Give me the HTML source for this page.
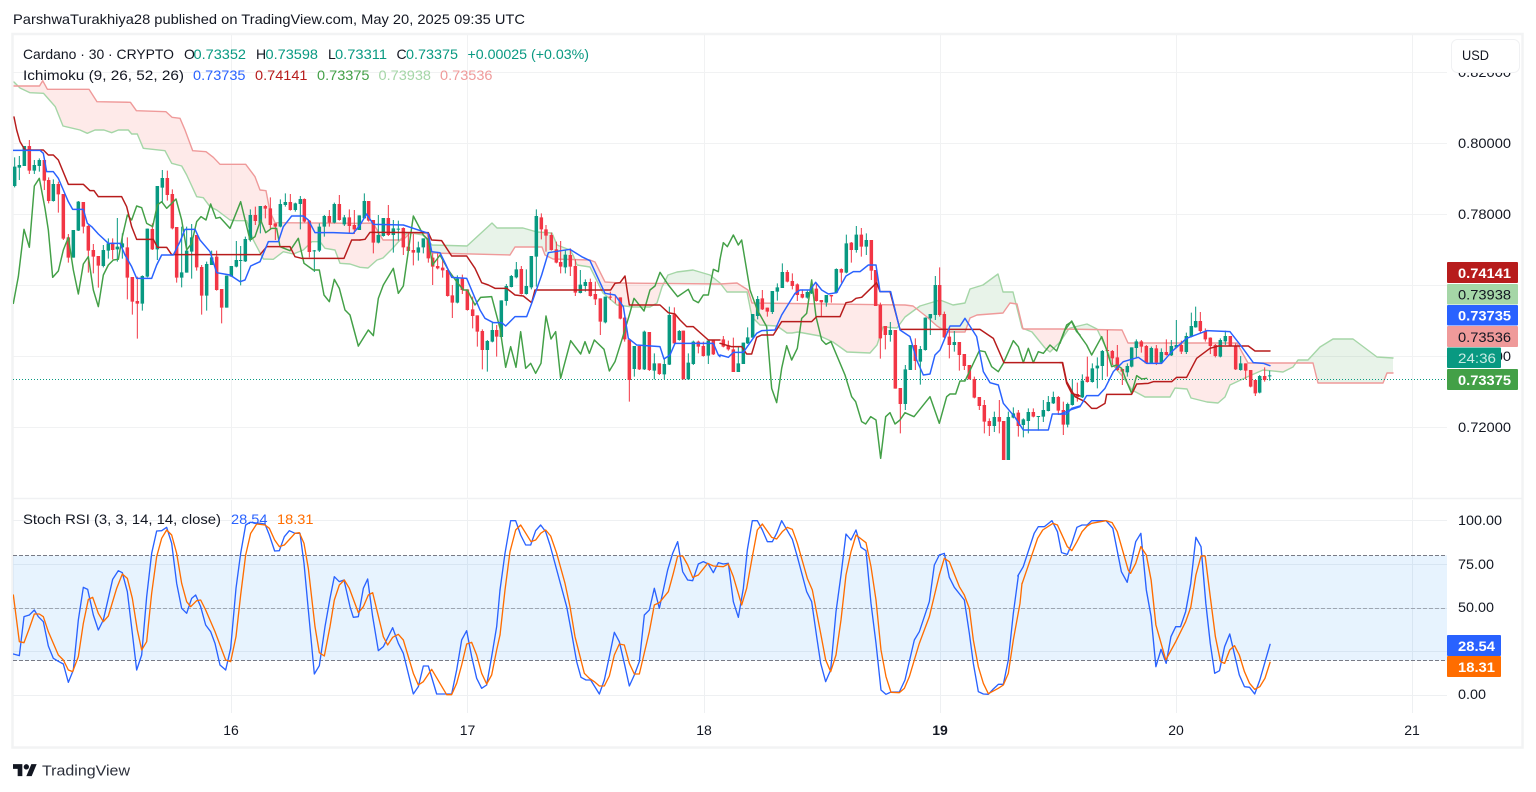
<!DOCTYPE html>
<html lang="en"><head><meta charset="utf-8"><title>Cardano chart</title>
<style>
html,body{margin:0;padding:0;background:#fff;width:1536px;height:792px;overflow:hidden}
svg{display:block;position:absolute;left:0;top:0}
text{font-family:"Liberation Sans",sans-serif;font-size:14px;fill:#131722}
.w{fill:none;stroke-linejoin:round;stroke-linecap:butt}
.l{fill:none;stroke-linejoin:round;stroke-linecap:round}
.gw{stroke:#089981;stroke-width:3}.gb{stroke:#089981;stroke-width:10.5}
.rw{stroke:#f23645;stroke-width:3}.rb{stroke:#f23645;stroke-width:10.5}
.tk{stroke:#2962ff;stroke-width:4.4}.kj{stroke:#b71c1c;stroke-width:4.4}.ch{stroke:#43a047;stroke-width:4.4}
.or{stroke:#ff6d00;stroke-width:4}.bl{stroke:#2962ff;stroke-width:4}
</style></head><body>
<svg width="1536" height="792" viewBox="0 0 1536 792" xmlns="http://www.w3.org/2000/svg">
<defs>
<clipPath id="pa"><rect x="13" y="35" width="1434" height="463"/></clipPath>
<clipPath id="pb"><rect x="13" y="500" width="1434" height="213"/></clipPath>
<clipPath id="belowB"><path d="M14 86L39.5 86L42.7 80.7L47.4 89.3L89 89.3L97 101.7L130.4 102.3L136.4 110.7L166 111.7L172 117.3L180 118.3L185 130L192.7 150.7L206 151.7L213.3 157.3L220 164.3L245.7 164.3L255 176.7L260 190L266 190.7L270 211.7L275 222.7L360 223.3L373 223L383 240L403 240L410 233L427 233L432 253L510 255L515 247L542 247L545 255L553 259L590 260L595 262L605 282L620 283L720 284L737 283L748 290L752 303L905 305L913 306L927 317L937 326L947 332L965 332L970 318L977 315L1003 313L1010 303L1017 304L1023 329L1060 329L1122 330L1128 343L1237 343L1248 363L1313 363L1318 383L1383 383L1387 373L1393 373L1393 700L14 700Z"/></clipPath>
<clipPath id="aboveB"><path d="M14 86L39.5 86L42.7 80.7L47.4 89.3L89 89.3L97 101.7L130.4 102.3L136.4 110.7L166 111.7L172 117.3L180 118.3L185 130L192.7 150.7L206 151.7L213.3 157.3L220 164.3L245.7 164.3L255 176.7L260 190L266 190.7L270 211.7L275 222.7L360 223.3L373 223L383 240L403 240L410 233L427 233L432 253L510 255L515 247L542 247L545 255L553 259L590 260L595 262L605 282L620 283L720 284L737 283L748 290L752 303L905 305L913 306L927 317L937 326L947 332L965 332L970 318L977 315L1003 313L1010 303L1017 304L1023 329L1060 329L1122 330L1128 343L1237 343L1248 363L1313 363L1318 383L1383 383L1387 373L1393 373L1393 0L14 0Z"/></clipPath>
</defs>

<rect x="12.5" y="34" width="1510" height="713.5" fill="#fff" stroke="#f2f3f4" stroke-width="2.5"/>
<path d="M13 498.5H1522" stroke="#f0f1f3" stroke-width="1.5" fill="none"/>

<!-- grid -->
<path d="M13 72.5H1447M13 143.5H1447M13 214.5H1447M13 285.5H1447M13 356.5H1447M13 427.5H1447M231.5 35V498M467.5 35V498M704.5 35V498M940.5 35V498M1176.5 35V498M1412.5 35V498" stroke="#f1f2f3" fill="none"/>
<path d="M13 520.5H1447M13 564.5H1447M13 608.5H1447M13 651.5H1447M13 695.5H1447M231.5 500V713M467.5 500V713M704.5 500V713M940.5 500V713M1176.5 500V713M1412.5 500V713" stroke="#eef0f2" fill="none"/>

<g clip-path="url(#pa)">
<!-- cloud -->
<g clip-path="url(#belowB)"><path fill="#f44336" fill-opacity=".11" d="M14 82L20 88L30 92.7L43.5 93.3L49.4 100L55.3 106.7L63 126L80 130L87.3 133.3L95 130L104 130L111.7 132.7L118.3 130L128.3 130L131.7 134L137.3 134L143.3 148.3L165 150.7L171.7 163.3L181.7 166L186.7 175L196.7 196.7L203.3 197.7L210 206.7L216.7 210L230 220L236.7 220.7L246.7 220.7L253.3 240L263.3 259L273.3 259.3L283.3 251.7L293.3 254L303.3 250L311.7 241.7L320 241.7L325 248.3L335 250L340 263.3L350 264L360 267.3L368 268L377 260L383 258L393 248L400 240L407 233L412 233L423 235L432 245L467 246L492 223L497 228L523 228L537 232L552 233L557 245L570 250L573 255L577 265L590 267L603 293L617 305L633 307L650 307L657 303L662 287L668 275L677 272L693 270L710 275L720 283L727 292L747 292L752 317L760 325L777 326L787 333L792 333L798 332L820 336L833 342L847 352L870 353L877 345L883 327L897 328L905 317L920 306L940 300L953 305L965 303L970 289L983 285L998 274L1003 292L1013 292L1022 328L1032 332L1045 348L1050 352L1060 342L1068 330L1070 328L1087 324L1097 329L1107 350L1113 365L1123 377L1132 390L1145 397L1170 397L1175 388L1187 389L1191 398L1207 402L1218 403L1225 397L1230 385L1247 377L1263 370L1283 372L1293 367L1298 360L1308 360L1320 347L1333 339L1353 339L1377 357L1393 358L1393 0L14 0Z"/></g>
<g clip-path="url(#aboveB)"><path fill="#43a047" fill-opacity=".12" d="M14 82L20 88L30 92.7L43.5 93.3L49.4 100L55.3 106.7L63 126L80 130L87.3 133.3L95 130L104 130L111.7 132.7L118.3 130L128.3 130L131.7 134L137.3 134L143.3 148.3L165 150.7L171.7 163.3L181.7 166L186.7 175L196.7 196.7L203.3 197.7L210 206.7L216.7 210L230 220L236.7 220.7L246.7 220.7L253.3 240L263.3 259L273.3 259.3L283.3 251.7L293.3 254L303.3 250L311.7 241.7L320 241.7L325 248.3L335 250L340 263.3L350 264L360 267.3L368 268L377 260L383 258L393 248L400 240L407 233L412 233L423 235L432 245L467 246L492 223L497 228L523 228L537 232L552 233L557 245L570 250L573 255L577 265L590 267L603 293L617 305L633 307L650 307L657 303L662 287L668 275L677 272L693 270L710 275L720 283L727 292L747 292L752 317L760 325L777 326L787 333L792 333L798 332L820 336L833 342L847 352L870 353L877 345L883 327L897 328L905 317L920 306L940 300L953 305L965 303L970 289L983 285L998 274L1003 292L1013 292L1022 328L1032 332L1045 348L1050 352L1060 342L1068 330L1070 328L1087 324L1097 329L1107 350L1113 365L1123 377L1132 390L1145 397L1170 397L1175 388L1187 389L1191 398L1207 402L1218 403L1225 397L1230 385L1247 377L1263 370L1283 372L1293 367L1298 360L1308 360L1320 347L1333 339L1353 339L1377 357L1393 358L1393 700L14 700Z"/></g>
<path class="l" stroke="#a5d6a7" stroke-width="1.4" d="M14 82L20 88L30 92.7L43.5 93.3L49.4 100L55.3 106.7L63 126L80 130L87.3 133.3L95 130L104 130L111.7 132.7L118.3 130L128.3 130L131.7 134L137.3 134L143.3 148.3L165 150.7L171.7 163.3L181.7 166L186.7 175L196.7 196.7L203.3 197.7L210 206.7L216.7 210L230 220L236.7 220.7L246.7 220.7L253.3 240L263.3 259L273.3 259.3L283.3 251.7L293.3 254L303.3 250L311.7 241.7L320 241.7L325 248.3L335 250L340 263.3L350 264L360 267.3L368 268L377 260L383 258L393 248L400 240L407 233L412 233L423 235L432 245L467 246L492 223L497 228L523 228L537 232L552 233L557 245L570 250L573 255L577 265L590 267L603 293L617 305L633 307L650 307L657 303L662 287L668 275L677 272L693 270L710 275L720 283L727 292L747 292L752 317L760 325L777 326L787 333L792 333L798 332L820 336L833 342L847 352L870 353L877 345L883 327L897 328L905 317L920 306L940 300L953 305L965 303L970 289L983 285L998 274L1003 292L1013 292L1022 328L1032 332L1045 348L1050 352L1060 342L1068 330L1070 328L1087 324L1097 329L1107 350L1113 365L1123 377L1132 390L1145 397L1170 397L1175 388L1187 389L1191 398L1207 402L1218 403L1225 397L1230 385L1247 377L1263 370L1283 372L1293 367L1298 360L1308 360L1320 347L1333 339L1353 339L1377 357L1393 358"/>
<path class="l" stroke="#ef9a9a" stroke-width="1.4" d="M14 86L39.5 86L42.7 80.7L47.4 89.3L89 89.3L97 101.7L130.4 102.3L136.4 110.7L166 111.7L172 117.3L180 118.3L185 130L192.7 150.7L206 151.7L213.3 157.3L220 164.3L245.7 164.3L255 176.7L260 190L266 190.7L270 211.7L275 222.7L360 223.3L373 223L383 240L403 240L410 233L427 233L432 253L510 255L515 247L542 247L545 255L553 259L590 260L595 262L605 282L620 283L720 284L737 283L748 290L752 303L905 305L913 306L927 317L937 326L947 332L965 332L970 318L977 315L1003 313L1010 303L1017 304L1023 329L1060 329L1122 330L1128 343L1237 343L1248 363L1313 363L1318 383L1383 383L1387 373L1393 373"/>

<!-- last price dotted -->
<path d="M13 379.5H1447" stroke="#089981" stroke-dasharray="1 2" fill="none"/>

<!-- candles section 1 -->
<g transform="matrix(.33333 0 0 .33333 0 130)">
<path class="w gw" d="M44 82V172M58 78V150M73 48V108M103 90V132M118 85V125M160 148V215M220 300V383M235 213V303M310 345V412M325 325V386M352 264V395M367 310V386M427 436V542M442 296V442M472 168V390M487 120V216M545 290V472M560 290V428M575 282V446M620 395V542M635 362V404M680 437V533M694 408V440M709 333V412M722 348V466M736 320V396M751 238V335M781 228V310M841 208V292M856 190V230M886 218V245M901 198V298M943 360V426M958 280V366M973 255V320M1003 218V280M1033 255V288M1078 256V300"/>
<path class="w gb" d="M44 110V168M58 105V113M73 48V108M103 105V122M118 90V108M160 162V213M220 300V383M235 215V302M310 360V408M325 340V362M352 350V358M367 340V352M427 438V521M442 296V440M472 168V358M487 144V173M545 427V443M560 362V428M575 322V365M620 402V497M635 382V405M680 437V533M694 408V440M709 390V410M722 390V393M736 327V394M751 255V330M781 228V280M841 222V290M856 216V225M886 220V240M901 207V222M943 361V364M958 290V362M973 258V290M1003 222V278M1033 262V283M1078 256V300"/>
<path class="w rw" d="M88 30V132M133 90V180M146 142V220M175 155V248M190 192V330M205 312V398M250 216V310M265 285V428M280 342V430M295 378V473M338 325V388M382 322V508M397 441V554M412 440V626M457 280V360M502 122V212M517 178V298M530 291V458M590 315V422M605 405V554M650 362V482M665 477V580M766 230V285M796 225V265M811 202V298M826 280V330M871 192V242M913 205V278M928 270V382M988 240V290M1018 195V272M1048 238V310M1063 240V312"/>
<path class="w rb" d="M88 48V122M133 90V152M146 150V213M175 162V193M190 192V326M205 322V383M250 216V290M265 288V362M280 360V380M295 378V407M338 338V360M382 352V443M397 441V515M412 513V521M457 297V358M502 144V195M517 192V295M530 291V443M590 315V412M605 411V497M650 380V480M665 477V533M766 255V273M796 228V236M811 235V285M826 280V290M871 216V240M913 207V275M928 272V366M988 258V278M1018 222V270M1048 262V288M1063 285V298"/>
</g>
<!-- candles section 2 -->
<g transform="matrix(.33333 0 0 .33333 360 190)">
<path class="w gw" d="M13 10V85M55 75V160M70 84V140M100 90V188M115 92V152M175 155V212M190 145V190M292 256V340M382 450V545M397 398V457M424 331V442M439 282V347M454 255V292M469 216V265M499 238V314M514 198V298M529 58V290M616 180V250M661 240V310M676 268V305M736 320V400M823 468V560M853 422V540M883 490V568M913 505V568M928 350V525M958 420V452M985 490V568M1000 452V525M1045 448V522"/>
<path class="w gb" d="M13 33V85M55 135V158M70 84V138M100 115V135M115 116V119M175 172V188M190 145V172M292 266V338M382 453V480M397 420V455M424 331V441M439 288V333M454 258V291M469 238V262M499 288V312M514 198V292M529 78V200M616 194V232M661 284V309M676 276V288M736 320V397M823 468V537M853 425V538M883 520V542M913 522V553M928 375V524M958 423V450M985 518V568M1000 455V522M1045 452V497"/>
<path class="w rw" d="M26 33V95M40 90V190M85 45V138M130 112V195M145 130V185M160 132V226M205 130V218M218 190V285M233 190V238M248 205V263M263 240V320M277 285V384M307 254V312M322 298V362M338 320V415M352 376V470M367 418V538M410 405V500M484 228V314M544 70V148M558 105V185M574 128V182M589 155V220M602 153V250M631 175V258M646 208V318M691 266V320M706 275V345M721 325V435M751 305V330M766 315V340M781 322V388M794 380V455M808 448V635M838 468V540M868 426V543M898 520V555M943 352V462M970 422V568M1015 452V490M1030 455V500M1060 450V495"/>
<path class="w rb" d="M26 33V92M40 90V158M85 84V135M130 114V172M145 170V183M160 180V188M205 145V205M218 203V230M233 228V235M248 233V241M263 240V318M277 316V338M307 264V300M322 298V360M338 358V378M352 376V425M367 423V480M410 420V440M484 237V312M544 82V118M558 118V137M574 135V180M589 178V218M602 216V230M631 195V230M646 228V308M691 276V318M706 312V328M721 325V395M751 320V323M781 322V386M794 383V448M808 448V570M838 468V538M868 426V540M898 520V552M943 374V460M970 422V568M1015 455V470M1030 468V498M1060 450V493"/>
</g>
<!-- candles section 3 -->
<g transform="matrix(.33333 0 0 .33333 720 220)">
<path class="w gw" d="M55 380V456M70 368V432M83 322V372M98 282V353M113 228V298M157 213V282M172 190V242M187 130V204M262 212V236M275 178V222M319 225V260M349 145V220M379 44V160M409 18V98M439 40V105M511 306V365M556 435V570M571 375V450M601 378V494M616 292V392M631 282V345M646 168V300M703 333V395M823 575V636M865 575V720M880 562V595M910 595V652M925 565V640M955 588V632M970 540V606M985 528V574M1000 515V552M1043 548V622M1057 478V557"/>
<path class="w gb" d="M55 430V456M70 368V432M83 352V370M98 282V353M113 237V288M157 213V276M172 202V215M187 156V204M262 216V233M275 205V220M319 225V248M349 147V218M379 70V158M409 44V90M439 60V80M511 330V345M556 448V552M571 375V450M601 387V425M616 293V390M631 282V295M646 195V285M703 366V375M823 591V618M865 591V720M880 580V593M910 598V615M925 576V603M955 588V591M970 570V590M985 546V573M1000 531V550M1043 552V614M1057 520V555"/>
<path class="w rw" d="M10 348V382M25 362V392M40 353V456M127 210V270M142 263V290M202 150V187M217 160V208M232 190V243M247 208V235M289 190V245M304 240V290M334 225V248M364 145V188M394 66V128M424 24V110M454 60V180M467 150V258M481 248V416M496 318V388M526 330V506M541 504V640M586 355V450M659 142V290M673 275V354M688 320V415M718 366V452M733 402V450M748 435V478M763 470V535M778 531V570M793 540V640M808 595V648M838 540V640M851 603V720M895 570V650M940 565V592M1015 528V585M1030 545V645M1072 488V545"/>
<path class="w rb" d="M10 358V380M25 376V388M40 388V456M127 235V268M142 263V275M202 156V185M217 183V198M232 193V225M247 222V233M289 206V243M304 240V247M334 225V229M364 147V158M394 68V90M424 44V80M454 60V152M467 150V258M481 255V355M496 318V345M526 330V506M541 504V552M586 375V423M659 195V285M673 282V352M688 350V375M718 366V405M733 402V438M748 435V478M763 477V533M778 531V558M793 555V605M808 603V618M838 591V605M851 603V720M895 578V618M940 576V590M1015 531V572M1030 570V614M1072 522V531"/>
</g>
<!-- candles section 4 -->
<g transform="matrix(.33333 0 0 .33333 1060 250)">
<path class="w gw" d="M67 373V444M97 340V398M112 322V415M127 300V390M202 340V380M215 292V352M229 268V325M274 290V342M304 295V340M334 270V318M349 210V295M379 248V312M394 188V262M407 170V233M481 265V322M496 242V285M542 318V362M599 375V430M629 362V392"/>
<path class="w gb" d="M67 392V442M97 355V396M112 347V355M127 303V348M202 348V367M215 292V350M229 274V294M274 294V340M304 306V338M334 288V316M349 285V292M379 258V306M394 228V260M407 213V232M481 270V320M496 258V274M542 340V360M599 378V428M629 376V379"/>
<path class="w rw" d="M82 320V398M142 240V380M157 300V345M172 285V363M187 357V405M244 270V308M259 285V342M289 285V345M319 268V317M364 272V312M421 186V248M436 235V275M451 262V312M466 282V322M511 258V290M527 280V360M557 340V388M572 360V412M586 390V438M614 352V395"/>
<path class="w rb" d="M82 380V396M142 300V303M157 303V325M172 322V360M187 357V365M244 274V290M259 288V340M289 295V338M319 306V315M364 285V305M421 213V243M436 243V268M451 263V288M466 285V318M511 258V288M527 286V358M557 340V362M572 360V410M586 390V430M614 378V390"/>
</g>

<!-- ichimoku lines -->
<g transform="matrix(.33333 0 0 .33333 0 130)">
<path class="l ch" d="M40 520L55 440L72 298L88 352L103 168L118 145L135 235L145 300L158 442L175 423L190 360L205 322L220 420L235 492L250 402L265 380L280 480L295 530L310 435L325 405L340 390L355 388L367 320L382 255L395 270L410 228L425 233L440 280L458 290L472 225L485 215L500 235L528 207L545 270L560 360L575 340L590 275L603 260L618 270L632 222L648 265L660 262L690 295L722 215L750 330L765 320L782 270L797 308L815 295L830 295L840 350L870 362L895 325L912 400L940 420L958 420L972 495L988 515L1003 448L1018 475L1035 540L1050 555L1075 648"/>
<path class="l kj" d="M42 -39L50 0L60 35L75 60H130L145 75H160L175 90L205 163H250L270 182H282L295 200H365L380 230L395 290L410 328H460L472 352H500L515 374H780L800 350H870L885 380L905 385H1032L1055 330H1080"/>
<path class="l tk" d="M40 61H120L130 70L140 125H160L175 145L190 180L205 215L218 238H250L262 280L275 290L295 312L325 340H360L375 375L395 410L410 445H455L470 405L485 375H520L540 335L555 298H585L600 330L630 365L650 428L690 435L720 455L735 450L752 408L780 395L805 335H835L850 290L875 258H910L925 270L945 308H1000L1060 310L1080 285"/>
</g>
<g transform="matrix(.33333 0 0 .33333 360 190)">
<path class="l ch" d="M-5 468L25 420L40 437L55 325L70 285L100 235L115 310L130 288L160 78L190 135L205 150L218 225L240 195L265 240L290 275L310 300L322 300L345 345L362 322L395 320L420 415L437 532L452 470L468 532L482 425L497 535L512 520L527 550L543 520L558 378L573 447L587 425L602 565L632 452L662 492L675 455L688 490L703 450L732 478L748 543L765 515L787 445L808 375L822 325L852 363L870 300L885 288L900 247L925 285L953 320L985 298L1000 330L1015 338L1030 315L1045 315L1060 238L1075 245L1080 208"/>
<path class="l kj" d="M0 150L15 148L30 127L205 128L215 150L245 152L275 198L320 198L345 235L365 278L385 285L405 295L440 295L465 315L490 318L515 338L525 300L752 300L765 280L780 278L795 258L808 345L900 345L925 368L945 372L960 390L980 410L1000 410L1045 450L1080 450"/>
<path class="l tk" d="M0 105L20 72L40 103L130 105L205 130L215 185L240 188L258 225L275 262L320 265L360 360L375 385L400 398L425 398L437 408L465 380L500 380L515 340L545 255L565 188L630 178L665 200L690 212L735 310L765 315L790 350L805 445L830 465L900 470L912 507L930 495L945 460L1060 460L1075 495L1080 500"/>
</g>
<g transform="matrix(.33333 0 0 .33333 720 220)">
<path class="l ch" d="M0 118L10 68L22 80L40 45L55 75L65 60L90 210L112 270L140 320L155 505L170 548L185 445L200 377L215 420L232 385L245 295L260 280L275 180L288 290L305 360L318 373L333 365L375 465L395 530L407 545L425 605L437 612L452 590L468 600L482 715L497 590L510 578L525 612L540 600L555 578L582 590L630 530L658 610L680 530L690 522L707 522L720 483L735 483L778 392L795 395L815 440L835 455L850 430L880 362L895 380L910 428L925 385L940 428L955 395L970 400L990 375L1010 393L1040 315L1055 305L1070 335L1080 345"/>
<path class="l kj" d="M0 370L35 380L65 380L80 402L95 402L110 352L125 345L160 345L185 305L275 305L290 290L360 290L378 248L395 245L408 235L425 232L470 188L480 215L510 215L540 328L780 328L820 355L852 428L1027 428L1040 490L1055 520L1080 528"/>
<path class="l tk" d="M0 405L25 412L40 397L70 397L110 340L125 332L165 330L185 285L225 220L240 210L270 210L287 187L305 210L325 222L350 218L378 168L400 155L420 155L445 135L468 135L480 215L512 215L540 330L570 350L590 420L610 465L630 462L645 405L660 390L690 318L720 318L735 295L770 350L790 455L810 488L835 495L850 550L885 592L910 630L985 630L997 582L1040 582L1055 565L1080 558"/>
</g>
<g transform="matrix(.33333 0 0 .33333 1060 250)">
<path class="l ch" d="M0 280L15 240L35 213L55 250L80 285L95 315L125 260L140 300L155 350L170 345L185 355L200 395L215 430L230 377L245 387L260 385"/>
<path class="l kj" d="M0 338L8 338L20 395L45 440L75 455L95 475L110 475L135 460L140 433L215 433L230 402L265 400L280 395L335 395L350 382L380 382L410 325L450 295L475 288L565 288L585 303L630 303"/>
<path class="l tk" d="M0 493L30 480L60 470L80 437L115 437L135 415L160 365L190 335L235 322L260 340L305 340L335 305L380 265L420 250L440 242L510 245L545 290L580 338L610 340L630 347"/>
</g>
</g>

<!-- stoch pane -->
<rect x="13" y="555.5" width="1434" height="105" fill="#2196f3" fill-opacity=".11"/>
<path d="M13 555.5H1447M13 660.5H1447" stroke="#787b86" stroke-dasharray="4 2" fill="none"/>
<path d="M13 608.5H1447" stroke="#787b86" stroke-opacity=".6" stroke-dasharray="4 2" fill="none"/>
<g clip-path="url(#pb)">
<g transform="matrix(.33333 0 0 .33333 0 500)">
<path class="l bl" d="M40 462L58 467L72 350L88 345L103 330L115 350L130 365L145 438L160 475L175 484L190 492L205 547L220 510L235 360L250 262L263 268L280 345L295 390L310 360L338 238L355 212L367 218L382 275L397 400L410 510L425 465L440 290L455 160L470 93L485 92L500 82L515 130L530 250L545 325L560 340L575 295L587 285L602 320L617 375L632 395L645 430L660 495L677 510L692 445L708 265L722 160L737 75L750 67L780 70L795 72L808 105L824 153L838 152L853 110L868 92L885 100L900 100L912 190L925 330L943 522L958 497L975 380L990 295L1003 230L1018 245L1032 240L1050 320L1060 352L1075 350L1090 265L1103 237L1118 350L1135 452L1150 440L1178 383L1195 430L1210 460L1240 582L1255 560L1270 498L1285 498L1310 582L1355 582L1370 510L1385 420L1400 392L1415 470L1430 535L1445 565L1460 555L1475 470L1490 380L1500 270"/>
<path class="l or" d="M40 285L58 425L72 428L88 385L103 342L118 342L130 350L145 395L175 465L190 480L205 510L218 515L235 470L250 370L265 298L278 292L295 340L310 365L325 348L350 265L367 222L382 235L397 295L412 390L425 450L440 425L455 280L470 170L485 115L500 90L515 105L530 160L545 250L560 305L572 320L590 302L602 300L617 330L645 395L677 480L692 485L708 410L722 285L737 165L752 100L770 72L795 75L808 85L824 120L838 140L853 135L885 100L898 98L912 130L925 205L945 380L958 458L973 468L990 380L1003 300L1018 255L1033 240L1048 265L1075 338L1090 320L1105 285L1118 278L1150 410L1163 435L1178 412L1195 403L1210 420L1240 520L1255 555L1270 545L1295 508L1340 584L1355 584L1370 550L1385 495L1400 432L1415 427L1430 465L1445 520L1460 552L1475 525L1490 450L1500 405"/>
</g>
<g transform="matrix(.33333 0 0 .33333 500 500)">
<path class="l bl" d="M0 270L15 160L32 62L47 62L62 105L77 135L92 135L107 92L122 75L137 95L150 135L200 320L215 400L230 485L243 532L258 540L272 540L298 582L313 540L328 470L343 397L358 425L373 490L388 558L403 525L418 485L433 345L448 330L463 265L478 325L503 210L518 160L533 125L548 215L563 240L578 242L595 192L610 185L625 192L640 218L655 188L670 192L685 190L700 305L715 352L730 265L742 150L757 62L772 62L787 90L802 125L817 125L830 100L845 62L877 118L892 170L920 275L935 305L950 410L962 490L977 545L992 510L1008 335L1023 225L1038 102L1053 120L1068 90L1083 142L1098 152L1113 310L1128 430L1143 570L1158 583L1173 576L1198 576L1215 540L1243 420L1258 395L1288 305L1303 195L1318 165L1333 160L1348 232L1363 262L1393 300L1408 400L1420 490L1435 575L1450 582L1465 583L1480 567L1495 553L1510 553L1525 480L1540 340L1555 228"/>
<path class="l or" d="M0 405L15 270L30 155L47 90L62 75L93 125L107 120L122 100L137 90L152 108L170 160L195 250L210 320L225 410L253 520L268 535L283 545L298 558L313 558L328 528L343 465L358 432L373 435L388 490L403 522L418 522L448 395L463 315L478 308L505 275L520 220L533 168L548 168L563 195L578 232L595 225L623 190L640 198L670 200L685 192L700 230L725 315L740 265L757 170L772 90L787 72L815 112L830 117L847 95L862 82L877 88L892 130L922 235L937 270L962 400L977 480L992 515L1008 465L1023 360L1038 225L1053 155L1068 105L1098 128L1113 200L1128 300L1143 450L1158 530L1173 577L1198 578L1213 565L1228 530L1258 430L1288 350L1318 225L1333 175L1348 185L1378 260L1393 285L1408 325L1420 420L1435 500L1450 550L1465 581L1495 565L1510 555L1525 520L1540 420L1560 310L1566 250"/>
</g>
<g transform="matrix(.34188 0 0 .33333 1000 500)">
<path class="l bl" d="M52 228L68 200L100 100L112 80L130 80L152 62L168 95L180 158L197 163L210 130L225 82L240 75L255 75L268 62L310 62L330 85L355 215L372 247L397 125L412 100L428 270L442 350L456 500L471 448L486 490L500 410L514 380L528 380L543 335L558 250L573 112L588 140L602 310L615 430L628 520L642 512L657 440L672 402L700 525L715 560L730 562L745 582L760 540L790 433"/>
<path class="l or" d="M65 250L85 190L110 115L125 90L155 70L168 75L197 140L210 152L225 125L240 95L255 78L268 70L310 62L328 68L343 95L375 210L382 220L397 190L412 140L428 165L442 240L456 375L485 480L514 425L543 365L558 322L573 225L588 168L600 168L615 290L630 410L645 485L657 490L672 450L686 437L700 465L715 515L730 550L745 568L760 560L775 535L790 487"/>
</g>
</g>

<!-- top text -->
<text x="13" y="24" textLength="512" lengthAdjust="spacingAndGlyphs">ParshwaTurakhiya28 published on TradingView.com, May 20, 2025 09:35 UTC</text>

<!-- legend -->
<text x="23" y="59" textLength="151" lengthAdjust="spacingAndGlyphs">Cardano · 30 · CRYPTO</text>
<text x="184" y="59">O</text><text x="193.5" y="59" textLength="52.5" lengthAdjust="spacingAndGlyphs" style="fill:#089981">0.73352</text>
<text x="256" y="59">H</text><text x="265.5" y="59" textLength="52.5" lengthAdjust="spacingAndGlyphs" style="fill:#089981">0.73598</text>
<text x="328" y="59">L</text><text x="335" y="59" textLength="52" lengthAdjust="spacingAndGlyphs" style="fill:#089981">0.73311</text>
<text x="396.5" y="59">C</text><text x="406" y="59" textLength="52" lengthAdjust="spacingAndGlyphs" style="fill:#089981">0.73375</text>
<text x="467.5" y="59" textLength="121.5" lengthAdjust="spacingAndGlyphs" style="fill:#089981">+0.00025 (+0.03%)</text>
<text x="23" y="80" textLength="161" lengthAdjust="spacingAndGlyphs">Ichimoku (9, 26, 52, 26)</text>
<text x="193" y="80" textLength="52.5" lengthAdjust="spacingAndGlyphs" style="fill:#2962ff">0.73735</text>
<text x="255" y="80" textLength="52.5" lengthAdjust="spacingAndGlyphs" style="fill:#b71c1c">0.74141</text>
<text x="317" y="80" textLength="52.5" lengthAdjust="spacingAndGlyphs" style="fill:#43a047">0.73375</text>
<text x="378.5" y="80" textLength="52.5" lengthAdjust="spacingAndGlyphs" style="fill:#a5d6a7">0.73938</text>
<text x="440" y="80" textLength="52.5" lengthAdjust="spacingAndGlyphs" style="fill:#ef9a9a">0.73536</text>

<text x="23" y="524" textLength="198" lengthAdjust="spacingAndGlyphs">Stoch RSI (3, 3, 14, 14, close)</text>
<text x="231" y="524" textLength="36.5" lengthAdjust="spacingAndGlyphs" style="fill:#2962ff">28.54</text>
<text x="277" y="524" textLength="36.5" lengthAdjust="spacingAndGlyphs" style="fill:#ff6d00">18.31</text>

<!-- price axis -->
<text x="1458" y="77" textLength="53" lengthAdjust="spacingAndGlyphs">0.82000</text>
<rect x="1451.5" y="39.5" width="68" height="33" rx="6" fill="#fff" stroke="#f0f1f3"/>
<text x="1462" y="60" textLength="27" lengthAdjust="spacingAndGlyphs">USD</text>
<text x="1458" y="148" textLength="53" lengthAdjust="spacingAndGlyphs">0.80000</text>
<text x="1458" y="219" textLength="53" lengthAdjust="spacingAndGlyphs">0.78000</text>
<text x="1458" y="361" textLength="53" lengthAdjust="spacingAndGlyphs">0.74000</text>
<text x="1458" y="432" textLength="53" lengthAdjust="spacingAndGlyphs">0.72000</text>

<rect x="1447" y="262" width="71" height="21" rx="1" fill="#b71c1c"/>
<text x="1458" y="278" textLength="53" lengthAdjust="spacingAndGlyphs" style="fill:#fff;font-weight:700">0.74141</text>
<rect x="1447" y="284" width="71" height="20.5" rx="1" fill="#a5d6a7"/>
<text x="1458" y="299.5" textLength="53" lengthAdjust="spacingAndGlyphs">0.73938</text>
<rect x="1447" y="305" width="71" height="20.5" rx="1" fill="#2962ff"/>
<text x="1458" y="320.5" textLength="53" lengthAdjust="spacingAndGlyphs" style="fill:#fff;font-weight:700">0.73735</text>
<rect x="1447" y="326" width="71" height="21" rx="1" fill="#ef9a9a"/>
<text x="1458" y="342" textLength="53" lengthAdjust="spacingAndGlyphs">0.73536</text>
<rect x="1447" y="347.5" width="54" height="20.5" rx="1" fill="#089981"/>
<text x="1458" y="363" textLength="38" lengthAdjust="spacingAndGlyphs" style="fill:#c8ebe4">24:36</text>
<rect x="1447" y="369" width="71" height="21" rx="1" fill="#43a047"/>
<text x="1458" y="385" textLength="53" lengthAdjust="spacingAndGlyphs" style="fill:#fff;font-weight:700">0.73375</text>

<!-- stoch axis -->
<text x="1458" y="525" textLength="44" lengthAdjust="spacingAndGlyphs">100.00</text>
<text x="1458" y="569" textLength="36" lengthAdjust="spacingAndGlyphs">75.00</text>
<text x="1458" y="612" textLength="36" lengthAdjust="spacingAndGlyphs">50.00</text>
<text x="1458" y="699" textLength="28" lengthAdjust="spacingAndGlyphs">0.00</text>
<rect x="1447" y="635" width="54" height="21" rx="1" fill="#2962ff"/>
<text x="1458" y="651" textLength="37" lengthAdjust="spacingAndGlyphs" style="fill:#fff;font-weight:700">28.54</text>
<rect x="1447" y="656" width="54" height="21" rx="1" fill="#ff6d00"/>
<text x="1458" y="672" textLength="37" lengthAdjust="spacingAndGlyphs" style="fill:#fff;font-weight:700">18.31</text>

<!-- time axis -->
<text x="231" y="735" text-anchor="middle">16</text>
<text x="467.5" y="735" text-anchor="middle">17</text>
<text x="704" y="735" text-anchor="middle">18</text>
<text x="940" y="735" text-anchor="middle" style="font-weight:700">19</text>
<text x="1176" y="735" text-anchor="middle">20</text>
<text x="1412" y="735" text-anchor="middle">21</text>

<!-- logo -->
<g transform="translate(13 761.5) scale(.667)" fill="#131722">
<path d="M14 22H7V11H0V4h14v18zM28 22h-8l7.5-18h8L28 22z"/><circle cx="20" cy="8" r="4"/>
</g>
<text x="42" y="775.5" textLength="88" lengthAdjust="spacingAndGlyphs" style="font-size:15px;fill:#2a2e39">TradingView</text>
</svg>
</body></html>
